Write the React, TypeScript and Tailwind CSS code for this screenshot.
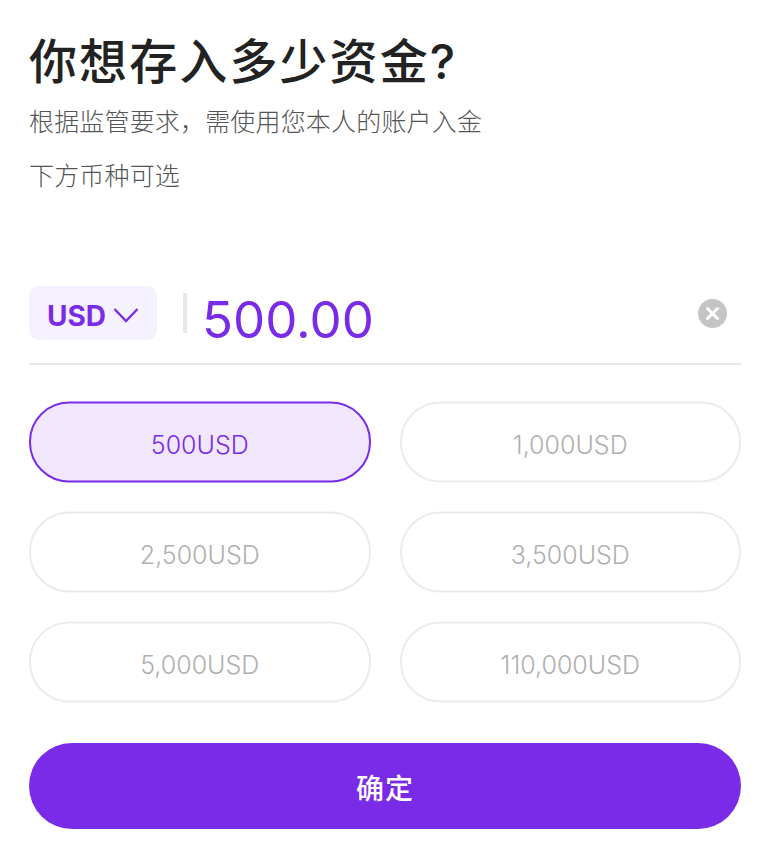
const amounts = ["500USD","1,000USD","2,500USD","3,500USD","5,000USD","110,000USD"];
export default function App() {
  return (
    <div className="w-[770px] h-[843px] bg-white overflow-hidden px-[29px] font-['Inter','Noto_Sans_CJK_SC',sans-serif]">
      <h1 className="pt-[30px] text-[48px] leading-[64px] font-medium tracking-[2.1px] text-[#222222] whitespace-nowrap">你想存入多少资金?</h1>
      <p className="mt-[10px] text-[25px] leading-[36px] tracking-[0.17px] font-light text-[#555555]">根据监管要求，需使用您本人的账户入金</p>
      <p className="mt-[18px] text-[25px] leading-[36px] tracking-[0.17px] font-light text-[#555555]">下方币种可选</p>
      <div className="mt-[92px] h-[79px] flex items-start border-b-2 border-[#e8e8e8]">
        <div className="w-[128px] h-[54px] rounded-[10px] bg-[#f6f1fe] flex items-center justify-center gap-[7px] text-[#7a2be8] text-[28px] font-bold">
          <span className="pt-[6px]">USD</span>
          <svg className="mt-[3px]" width="26" height="16" viewBox="0 0 26 16" fill="none" stroke="currentColor" strokeWidth="2.300"><path d="M1.500 2 L13 14 L24.500 2"/></svg>
        </div>
        <div className="ml-[26px] mt-[7px] w-[4px] h-[40px] bg-[#e8e8e8]" />
        <div className="ml-[15px] mt-[1px] text-[51px] leading-[66px] text-[#7a2be8]">500.00</div>
        <div className="ml-auto mr-[14px] mt-[13px] w-[29px] h-[29px] rounded-full bg-[#c4c4c4] flex items-center justify-center">
          <svg width="15" height="15" viewBox="0 0 15 15" stroke="white" strokeWidth="3" strokeLinecap="round"><path d="M2.500 2.500L12.500 12.500M12.500 2.500L2.500 12.500"/></svg>
        </div>
      </div>
      <div className="mt-[36px] grid grid-cols-2 gap-x-[29px] gap-y-[29px]">
        {amounts.map((a, i) => (
          <div key={a} className={i === 0
            ? "h-[81px] pt-[6px] translate-y-[0.5px] rounded-[40px] border-2 border-[#7a2be8] bg-[#f0e7fd] flex items-center justify-center text-[25px] font-light text-[#7a2be8]"
            : "h-[81px] pt-[6px] translate-y-[0.5px] rounded-[40px] border-2 border-[#ebebeb] bg-white flex items-center justify-center text-[25px] font-light text-[#b0b0b0]"}>{a}</div>
        ))}
      </div>
      <button className="mt-[41px] w-full h-[86px] pt-[5px] rounded-[43px] bg-[#7a2be8] text-white text-[28px] font-medium tracking-[1px]">确定</button>
    </div>
  );
}
